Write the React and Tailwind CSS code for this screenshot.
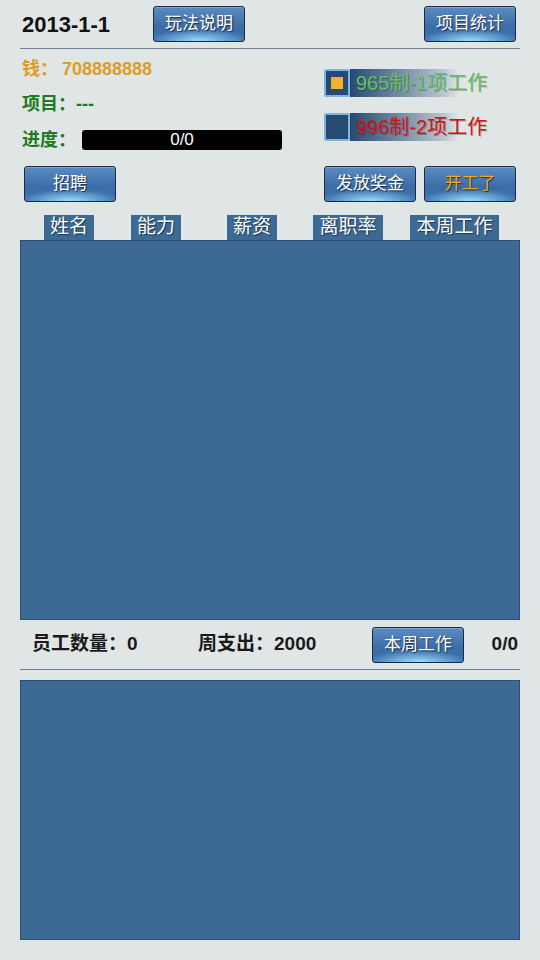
const FONT = "font-['Liberation_Sans','Noto_Sans_CJK_SC',sans-serif]";

const btn =
  "h-9 w-[92px] flex items-center justify-center rounded-[3px] border border-[#1c2b3c] text-[17px] font-normal [text-shadow:1px_1px_1px_rgba(0,0,0,0.6)] bg-[radial-gradient(ellipse_55%_35%_at_50%_100%,#9adcff_0%,rgba(120,200,255,0)_100%),linear-gradient(#5a8cc2,#3b6ca6_60%,#3d74b0)] shadow-[inset_0_1px_0_rgba(255,255,255,0.25)]";

function Button({ children, className = "", color = "text-white" }) {
  return <button className={`${btn} ${color} ${className}`}>{children}</button>;
}

function Check({ checked, label, color }) {
  return (
    <div className="flex items-center h-7">
      <div className="w-[26px] h-7 border-2 border-[#7cb6de] rounded-[2px] bg-[#274a72] flex items-center justify-center">
        {checked && <div className="w-3 h-3 bg-[#f2b12e]" />}
      </div>
      <div
        className={`h-7 pl-1.5 pr-2 flex items-center text-[20px] bg-[linear-gradient(90deg,#274a72,rgba(39,74,114,0.2)_65%,rgba(39,74,114,0)_75%)] [text-shadow:1px_1px_0_rgba(0,0,0,0.25)] ${color}`}
      >
        {label}
      </div>
    </div>
  );
}

const headers = [
  { t: "姓名", w: "w-[50px]", m: "ml-6" },
  { t: "能力", w: "w-[50px]", m: "ml-[37px]" },
  { t: "薪资", w: "w-[50px]", m: "ml-[46px]" },
  { t: "离职率", w: "w-[70px]", m: "ml-9" },
  { t: "本周工作", w: "w-[89px]", m: "ml-[27px]" },
];

export default function App() {
  return (
    <div className={`w-[540px] h-[960px] bg-[#e0e5e6] ${FONT} overflow-hidden`}>
      <div className="h-[49px] mx-5 flex items-center justify-between border-b border-[#6f8199]">
        <div className="flex items-center">
          <span className="w-[133px] pl-0.5 text-[22px] font-bold text-[#111]">2013-1-1</span>
          <Button>玩法说明</Button>
        </div>
        <Button className="mr-1">项目统计</Button>
      </div>

      <div className="mx-5 mt-2 flex justify-between">
        <div className="flex flex-col pl-0.5 font-bold text-[18px]">
          <div className="h-6 flex items-center text-[#e09c1e]">
            钱：<span className="ml-1">708888888</span>
          </div>
          <div className="h-6 mt-[11px] flex items-center text-[#1e7a1e]">项目：---</div>
          <div className="h-6 mt-3 flex items-center text-[#1e7a1e]">
            进度：
            <div className="ml-1.5 w-[200px] h-5 rounded-[3px] bg-black text-white font-normal text-[17px] flex items-center justify-center">
              0/0
            </div>
          </div>
        </div>
        <div className="flex flex-col gap-4 mt-[12px] w-[196px]">
          <Check checked label="965制-1项工作" color="text-[#5fc25f]" />
          <Check label="996制-2项工作" color="text-[#d41414]" />
        </div>
      </div>

      <div className="mx-5 mt-[14px] flex items-center justify-between">
        <Button className="ml-1">招聘</Button>
        <div className="flex gap-2 mr-1">
          <Button>发放奖金</Button>
          <Button color="text-[#f2aa1c]">开工了</Button>
        </div>
      </div>

      <div className="mx-5 mt-[13px] h-[25px] flex items-end">
        {headers.map((h) => (
          <div
            key={h.t}
            className={`${h.w} ${h.m} h-[25px] bg-[#3c6a94] text-white text-[19px] flex items-center justify-center [text-shadow:1px_1px_1px_rgba(0,0,0,0.5)]`}
          >
            {h.t}
          </div>
        ))}
      </div>
      <div className="mx-5 h-[380px] bg-[#3c6a94] border border-[#2c4f72]" />

      <div className="mx-5 h-[50px] flex items-center border-b border-[#6f8199] text-[19px] font-bold text-[#1a1a1a]">
        <span className="ml-3 w-[166px]">员工数量：0</span>
        <span className="w-[174px]">周支出：2000</span>
        <Button>本周工作</Button>
        <span className="ml-auto mr-0.5">0/0</span>
      </div>

      <div className="mx-5 mt-[10px] h-[260px] bg-[#3c6a94] border border-[#2c4f72]" />
    </div>
  );
}
